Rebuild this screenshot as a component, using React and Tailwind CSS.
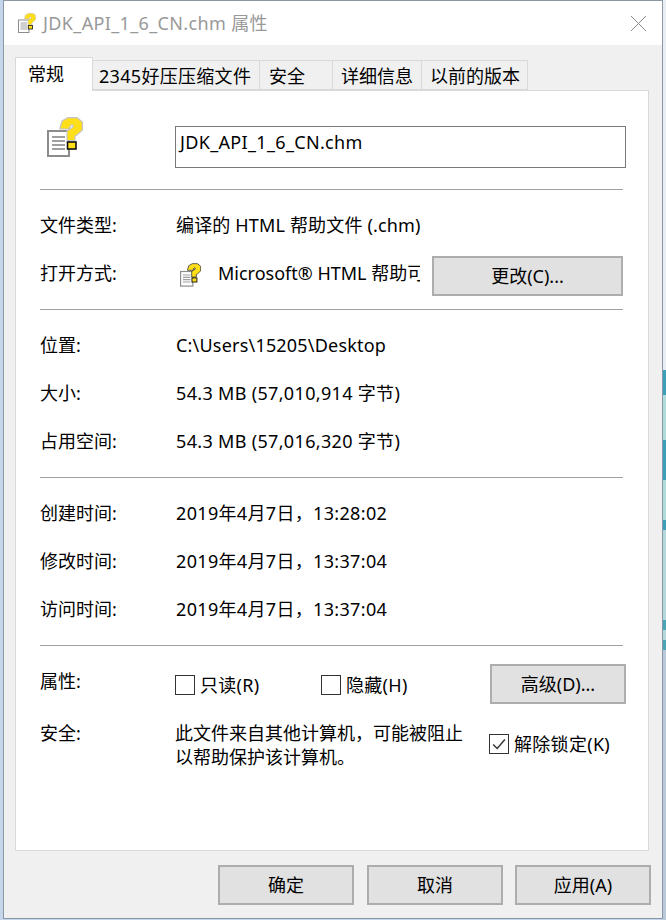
const font = "font-['Noto_Sans','Noto_Sans_CJK_SC',sans-serif]";

function HelpIcon({ className, edge = "#c4c4c4" }) {
  return (
    <svg viewBox="0 0 36 40" className={className}>
      <rect x="1" y="14" width="21" height="25" fill="#fff" stroke="#8c8c8c" strokeWidth="2" />
      <path d="M5 20h13M5 24h13M5 28h13M5 32h13" stroke="#a0a0a0" strokeWidth="2" />
      <path d="M13 11 L15 4 L21 .6 L30 .6 L35.4 5 L35.4 13 L30 18 L28 19 L28 23.5 L20 23.5 L20 14 L26 10 L26 8 L24 8 L22 12 L13 12 Z" fill="#ffdf1a" stroke={edge} strokeWidth="1.2" />
      <rect x="20.5" y="25" width="8.5" height="7" fill="#ffdf1a" stroke="#111" strokeWidth="1.6" />
    </svg>
  );
}

function Line() {
  return <div className="ml-[24px] mr-[25px] h-px shrink-0 bg-[#a0a0a0]" />;
}

function Row({ label, value, className, track = "tracking-[0.33px]" }) {
  return (
    <div className={`flex h-[24px] shrink-0 items-center ${className}`}>
      <span className="ml-[24px] w-[136px]">{label}</span>
      <span className={`whitespace-nowrap ${track}`}>{value}</span>
    </div>
  );
}

function Btn({ children, className }) {
  return (
    <div className={`flex h-[40px] shrink-0 items-center justify-center border-2 border-[#adadad] bg-[#e1e1e1] ${className}`}>
      {children}
    </div>
  );
}

function Check({ checked, label, className }) {
  return (
    <div className={`flex items-center ${className}`}>
      <div className="flex h-5 w-5 items-center justify-center border border-[#333] bg-white">
        {checked && (
          <svg viewBox="0 0 20 20" className="h-5 w-5">
            <path d="M3.5 10.5 L8 15 L16.5 5" fill="none" stroke="#333" strokeWidth="1.6" />
          </svg>
        )}
      </div>
      <span className="ml-[5px] whitespace-nowrap tracking-[0.3px]">{label}</span>
    </div>
  );
}

export default function App() {
  const tabs = [
    ["2345好压压缩文件", "w-[168px] pl-[6px] tracking-[0.3px]"],
    ["安全", "w-[74px] pl-[9px]"],
    ["详细信息", "w-[90px] pl-[8px]"],
    ["以前的版本", "w-[107px] pl-[8px]"],
  ];
  // the bit of desktop wallpaper that shows right of the window
  const strip = [
    ["h-[370px]", "bg-[#e8eef3]"],
    ["h-[25px]", "bg-[#3d9fb8]"],
    ["h-[45px]", "bg-[#b0dcdc]"],
    ["h-[40px]", "bg-[#3d9fb8]"],
    ["h-[40px]", "bg-[#b0dcdc]"],
    ["h-[10px]", "bg-[#3d9fb8]"],
    ["h-[90px]", "bg-[#b5d8dc]"],
    ["h-[10px]", "bg-[#4aa5b5]"],
    ["h-[10px]", "bg-[#b5d8dc]"],
    ["h-[10px]", "bg-[#4aa5b5]"],
    ["h-[270px]", "bg-[#b9c9da]"],
  ];
  return (
    <div className={`flex h-[920px] w-[666px] overflow-hidden bg-[#c3d6ec] text-[18px] leading-[24px] text-black ${font}`}>
      <div className="w-[3px] shrink-0" />
      <div className="mb-[1px] flex w-[660px] shrink-0 flex-col border border-[#8b97a5] bg-[#f0f0f0]">
        <div className="flex h-[44px] shrink-0 items-center bg-white pl-[14px] pr-[16px] text-[#999]">
          <HelpIcon className="h-[20px] w-[18px]" />
          <span className="ml-[7px] whitespace-nowrap tracking-[0.36px]">JDK_API_1_6_CN.chm 属性</span>
          <svg viewBox="0 0 15 15" className="ml-auto h-[15px] w-[15px]">
            <path d="M0 0L15 15M15 0L0 15" stroke="#8a8a8a" strokeWidth="1" />
          </svg>
        </div>
        <div className="ml-[11px] mt-[12px] flex h-[33px] shrink-0 items-end">
          <div className="relative z-10 -mb-px flex h-[34px] w-[78px] items-center border border-b-0 border-[#d9d9d9] bg-white pb-px pl-[12px]">常规</div>
          {tabs.map(([t, w]) => (
            <div key={t} className={`-ml-px flex h-[30px] items-center whitespace-nowrap border border-[#d9d9d9] pt-[2px] first:ml-0 ${w}`}>{t}</div>
          ))}
        </div>
        <div className="ml-[11px] flex h-[761px] w-[634px] shrink-0 flex-col border border-[#d9d9d9] bg-white">
          <div className="flex h-[98px] shrink-0 items-start pt-[26px]">
            <HelpIcon className="ml-[31px] h-[40px] w-[36px]" />
            <div className="ml-[92px] mt-[9px] h-[42px] w-[451px] border border-[#7a7a7a] pl-[4px] leading-[30px] tracking-[0.33px]">JDK_API_1_6_CN.chm</div>
          </div>
          <Line />
          <Row label="文件类型:" value="编译的 HTML 帮助文件 (.chm)" className="mt-[23px]" track="tracking-[0.16px]" />
          <div className="mt-[19px] flex h-[40px] shrink-0 items-start">
            <span className="ml-[24px] mt-[5px] w-[140px]">打开方式:</span>
            <HelpIcon className="mt-[6px] h-[26px] w-[21px]" edge="#222" />
            <span className="ml-[17px] mt-[5px] w-[202px] overflow-hidden whitespace-nowrap">Microsoft® HTML 帮助可执行程序</span>
            <Btn className="ml-[12px] w-[191px]">更改(C)...</Btn>
          </div>
          <div className="mt-[13px]"><Line /></div>
          <Row label="位置:" value="C:\Users\15205\Desktop" className="mt-[23px]" track="tracking-[0.2px]" />
          <Row label="大小:" value="54.3 MB (57,010,914 字节)" className="mt-[24px]" />
          <Row label="占用空间:" value="54.3 MB (57,016,320 字节)" className="mt-[24px]" />
          <div className="mt-[24px]"><Line /></div>
          <Row label="创建时间:" value="2019年4月7日，13:28:02" className="mt-[23px]" />
          <Row label="修改时间:" value="2019年4月7日，13:37:04" className="mt-[24px]" />
          <Row label="访问时间:" value="2019年4月7日，13:37:04" className="mt-[24px]" />
          <div className="mt-[24px]"><Line /></div>
          <div className="mt-[18px] flex h-[40px] shrink-0 items-start">
            <span className="ml-[24px] mt-[5px] w-[135px]">属性:</span>
            <Check label="只读(R)" className="mt-[9px] w-[146px]" />
            <Check label="隐藏(H)" className="mt-[9px] w-[169px]" />
            <Btn className="w-[136px]">高级(D)...</Btn>
          </div>
          <div className="mt-[17px] flex">
            <span className="ml-[24px] w-[135px]">安全:</span>
            <div className="w-[314px]">此文件来自其他计算机，可能被阻止<br />以帮助保护该计算机。</div>
            <Check checked label="解除锁定(K)" className="mt-[11px] h-[24px]" />
          </div>
        </div>
        <div className="mt-[14px] flex pl-[214px]">
          <Btn className="w-[136px]">确定</Btn>
          <Btn className="ml-[13px] w-[136px]">取消</Btn>
          <Btn className="ml-[12px] w-[136px]">应用(A)</Btn>
        </div>
      </div>
      <div className="flex w-[3px] shrink-0 flex-col">
        {strip.map(([h, c], i) => (
          <div key={i} className={`${h} ${c}`} />
        ))}
      </div>
    </div>
  );
}
